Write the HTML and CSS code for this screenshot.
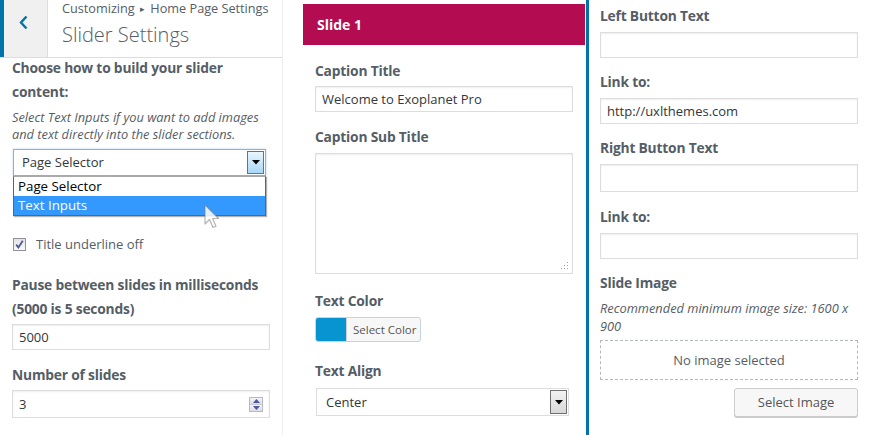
FILE: index.html
```html
<!DOCTYPE html>
<html>
<head>
<meta charset="utf-8">
<link rel="stylesheet" href="styles.css">
</head>
<body>
<div class="page">
  <div class="panel left">
    <div class="head">
      <div class="bar"></div>
      <div class="back">
        <svg width="44" height="57" viewBox="0 0 44 57"><polyline points="22.5,16.5 17,22.5 22.5,28.5" fill="none" stroke="#0073aa" stroke-width="2.4"/></svg>
      </div>
      <div class="titles">
        <div class="crumb">Customizing <span class="tri">▸</span> Home Page Settings</div>
        <div class="title">Slider Settings</div>
      </div>
    </div>
    <div class="lbody">
      <div class="label first">Choose how to build your slider content:</div>
      <div class="desc">Select Text Inputs if you want to add images and text directly into the slider sections.</div>
      <div class="selwrap">
        <div class="select focus">
          <span class="seltext">Page Selector</span>
          <span class="arrowbtn blue"><svg width="8" height="5" viewBox="0 0 8 5"><polygon points="0,0 8,0 4,4.5" fill="#000"/></svg></span>
        </div>
        <div class="dropdown">
          <div class="opt">Page Selector</div>
          <div class="opt hl">Text Inputs</div>
        </div>
        <svg class="cursor" width="18" height="28" viewBox="0 0 18 28"><path d="M1,1 L1,20 L5.5,15.5 L9,23.5 L12,22.2 L8.6,14.5 L14.5,14.5 Z" fill="rgba(255,255,255,0.85)" stroke="rgba(120,120,120,0.55)" stroke-width="1.2" stroke-linejoin="round"/></svg>
      </div>
      <div class="checkrow">
        <span class="checkbox"><svg width="11" height="11" viewBox="0 0 11 11"><path d="M2.2,5.6 L4.4,8.4 L8.8,1.8" fill="none" stroke="#4a5a9c" stroke-width="1.8"/></svg></span>
        <span class="checklabel">Title underline off</span>
      </div>
      <div class="label m22">Pause between slides in milliseconds (5000 is 5 seconds)</div>
      <input class="field h26 m3" type="text" value="5000">
      <div class="label m13">Number of slides</div>
      <div class="numwrap m3">
        <span class="numval">3</span>
        <span class="spin">
          <span class="sp"><svg width="7" height="4" viewBox="0 0 7 4"><polygon points="0,4 7,4 3.5,0" fill="#4a5a9c"/></svg></span>
          <span class="sp"><svg width="7" height="4" viewBox="0 0 7 4"><polygon points="0,0 7,0 3.5,4" fill="#4a5a9c"/></svg></span>
        </span>
      </div>
    </div>
  </div>

  <div class="panel middle">
    <div class="slidehead">Slide 1</div>
    <div class="mbody">
      <div class="label m14">Caption Title</div>
      <input class="field h26 m3" type="text" value="Welcome to Exoplanet Pro">
      <div class="label m13">Caption Sub Title</div>
      <div class="tawrap">
        <textarea class="ta"></textarea>
        <svg class="grip" width="8" height="8" viewBox="0 0 8 8"><g fill="#a0a0a0"><rect x="6" y="0" width="1" height="1"/><rect x="3" y="3" width="1" height="1"/><rect x="6" y="3" width="1" height="1"/><rect x="0" y="6" width="1" height="1"/><rect x="3" y="6" width="1" height="1"/><rect x="6" y="6" width="1" height="1"/></g></svg>
      </div>
      <div class="label m15">Text Color</div>
      <div class="colorbtn">
        <span class="swatch"></span>
        <span class="ctext">Select Color</span>
      </div>
      <div class="label m17">Text Align</div>
      <div class="select plain">
        <span class="seltext">Center</span>
        <span class="arrowbtn gray"><svg width="8" height="5" viewBox="0 0 8 5"><polygon points="0,0 8,0 4,4.5" fill="#000"/></svg></span>
      </div>
    </div>
  </div>

  <div class="panel right">
    <div class="label">Left Button Text</div>
    <input class="field h26 m4" type="text" value="">
    <div class="label m12">Link to:</div>
    <input class="field h26 m4" type="text" value="http://uxlthemes.com">
    <div class="label m12">Right Button Text</div>
    <input class="field h28 m4" type="text" value="">
    <div class="label m13">Link to:</div>
    <input class="field h26 m4" type="text" value="">
    <div class="label m12">Slide Image</div>
    <div class="desc r">Recommended minimum image size: 1600 x 900</div>
    <div class="placeholder">No image selected</div>
    <div class="btnrow"><span class="button">Select Image</span></div>
  </div>
</div>
</body>
</html>
```

FILE: styles.css
```css
* { box-sizing: border-box; }
html, body { margin: 0; padding: 0; background: #fff; }
body {
  font-family: "Open Sans", "Noto Sans", "Liberation Sans", sans-serif;
  color: #555d66;
  width: 871px;
  height: 435px;
  overflow: hidden;
}
.page { display: flex; height: 435px; }
.panel { height: 435px; }

/* left */
.left { width: 283px; border-right: 1px solid #eeeeee; }
.head { display: flex; height: 58px; border-bottom: 1px solid #dddddd; }
.bar { width: 4px; background: #0073aa; }
.back { width: 44px; background: #f0f0f1; border-right: 1px solid #dddddd; }
.back svg { display: block; }
.titles { padding-left: 14px; }
.crumb { font-size: 12.7px; line-height: 18px; margin-top: -1px; color: #555d66; }
.tri { font-size: 9px; position: relative; top: -1px; margin: 0 2px; }
.title { font-size: 20px; line-height: 26px; margin-top: 3px; font-weight: 300; color: #555d66; }
.lbody { padding-left: 12px; }

.label { font-size: 13.8px; font-weight: 700; line-height: 24px; color: #555d66; letter-spacing: -0.2px; }
.label.first { margin-top: -2px; padding-right: 30px; }
.desc { font-size: 12.8px; font-style: italic; line-height: 17px; margin-top: 5px; color: #555d66; padding-right: 8px; }
.desc.r { line-height: 18px; margin-top: 4px; }

.m3 { margin-top: 3px; }
.m4 { margin-top: 4px; }
.m12 { margin-top: 12px; }
.m13 { margin-top: 13px; }
.m14 { margin-top: 14px; }
.m15 { margin-top: 15px; }
.m17 { margin-top: 17px; }
.m22 { margin-top: 22px; }

.field {
  display: block;
  width: 258px;
  border: 1px solid #dddddd;
  box-shadow: inset 0 1px 2px rgba(0,0,0,0.07);
  font-family: inherit;
  font-size: 13px;
  color: #32373c;
  padding: 0 6px;
  background: #fff;
  outline: none;
}
.h26 { height: 26px; }
.h28 { height: 28px; }

.selwrap { position: relative; margin-top: 6px; }
.select {
  display: flex;
  align-items: stretch;
  justify-content: space-between;
  background: #fff;
  font-size: 13px;
  color: #32373c;
}
.select.focus {
  margin-left: 1px;
  width: 253px;
  height: 27px;
  border: 1px solid #7eb4ea;
  box-shadow: 0 0 2px rgba(126,180,234,0.6);
}
.seltext { padding-left: 8px; line-height: 25px; }
.arrowbtn { width: 17px; display: flex; align-items: center; justify-content: center; }
.arrowbtn.blue {
  background: linear-gradient(#eaf6fd, #a7d8f5);
  margin: 1px;
  border: 1px solid #3c7fb1;
}
.arrowbtn.gray {
  background: linear-gradient(#f2f2f2, #d8d8d8);
  border: 1px solid #707070;
  margin: 1px;
}
.dropdown {
  position: absolute;
  left: 1px;
  top: 27px;
  width: 253px;
  height: 40px;
  border: 1px solid #646464;
  border-top: 1px solid #aaaaaa;
  background: #fff;
  box-shadow: 1px 1px 1px rgba(0,0,0,0.3);
  font-size: 13.3px;
  color: #000;
}
.opt { height: 19px; line-height: 19px; padding-left: 4px; }
.opt.hl { background: #3399ff; color: #fff; }
.cursor { position: absolute; left: 192px; top: 55px; }

.checkrow { display: flex; align-items: center; margin-top: 61px; height: 14px; }
.checkbox {
  width: 13px; height: 13px;
  margin-left: 1px;
  border: 1px solid #8f8f9d;
  background: linear-gradient(#e4e4e4, #f8f8f8);
  display: flex; align-items: center; justify-content: center;
}
.checkbox svg { display: block; }
.checklabel { font-size: 13px; margin-left: 10px; color: #555d66; }

.numwrap {
  width: 258px; height: 28px;
  border: 1px solid #dddddd;
  box-shadow: inset 0 1px 2px rgba(0,0,0,0.07);
  display: flex; align-items: center; justify-content: space-between;
  font-size: 13px; color: #32373c;
  padding: 0 6px 0 6px;
}
.spin { display: flex; flex-direction: column; width: 14px; height: 15px; border: 1px solid #b8b8c8; }
.sp { flex: 1; display: flex; align-items: center; justify-content: center; background: linear-gradient(#f4f4f8, #dcdce8); }
.sp + .sp { border-top: 1px solid #c8c8d4; }
.sp svg { display: block; }

/* middle */
.middle { width: 283px; margin-left: 20px; padding-top: 4px; }
.slidehead {
  height: 41px;
  width: 282px;
  background: #b40c50;
  color: #fff;
  font-weight: 700;
  font-size: 14px;
  line-height: 41px;
  padding-left: 14px;
}
.mbody { padding-left: 12px; }
.tawrap { position: relative; margin-top: 4px; width: 258px; height: 121px; }
.ta {
  display: block;
  width: 258px; height: 121px;
  border: 1px solid #dddddd;
  box-shadow: inset 0 1px 2px rgba(0,0,0,0.07);
  resize: none;
  outline: none;
}
.grip { position: absolute; right: 4px; bottom: 4px; }
.colorbtn {
  margin-top: 4px;
  display: flex;
  width: 106px; height: 25px;
  border: 1px solid #c4d4e0;
  border-radius: 3px;
  overflow: hidden;
  background: #f7f7f7;
}
.swatch { width: 31px; background: #0894d0; border-right: 1px solid #d0d0d0; }
.ctext { font-size: 11.5px; line-height: 23px; padding-left: 6px; color: #555; }
.select.plain {
  margin-top: 5px;
  margin-left: 1px;
  width: 253px;
  height: 28px;
  border: 1px solid #dddddd;
}
.select.plain .seltext { padding-left: 9px; line-height: 26px; }

/* right */
.right {
  flex: 1;
  border-left: 3px solid #0073aa;
  padding-left: 11px;
  padding-top: 4px;
}
.placeholder {
  margin-top: 5px;
  width: 258px; height: 40px;
  border: 1px dashed #b4b9be;
  text-align: center;
  line-height: 38px;
  font-size: 13px;
  color: #555d66;
}
.btnrow { display: flex; justify-content: flex-end; width: 258px; margin-top: 8px; }
.button {
  width: 124px; height: 29px;
  border: 1px solid #cccccc;
  border-radius: 3px;
  background: #f7f7f7;
  box-shadow: 0 1px 0 #cccccc;
  text-align: center;
  font-size: 13px;
  line-height: 26px;
  color: #555;
}
```
